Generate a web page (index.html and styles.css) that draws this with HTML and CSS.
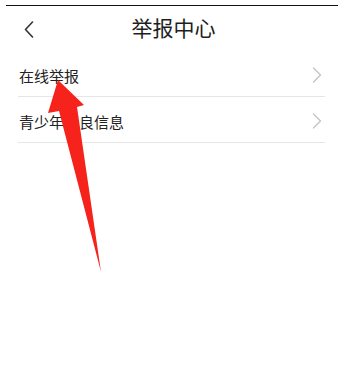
FILE: index.html
```html
<!DOCTYPE html>
<html lang="zh-CN">
<head>
<meta charset="utf-8">
<title>举报中心</title>
<link rel="stylesheet" href="styles.css">
</head>
<body>
<div class="page">
  <div class="topline"></div>
  <header class="nav">
    <svg class="back" width="10" height="17" viewBox="0 0 10 17"><path d="M8.5 1 L1.5 8.5 L8.5 16" fill="none" stroke="#333" stroke-width="1.6" stroke-linecap="round" stroke-linejoin="round"/></svg>
    <h1 class="title">举报中心</h1>
  </header>
  <ul class="list">
    <li class="row"><span class="label">在线举报</span><svg class="chev" width="10" height="16" viewBox="0 0 10 16"><path d="M1.5 1 L8.5 8 L1.5 15" fill="none" stroke="#c4c4c4" stroke-width="1.4" stroke-linecap="round" stroke-linejoin="round"/></svg></li>
    <li class="row"><span class="label">青少年不良信息</span><svg class="chev" width="10" height="16" viewBox="0 0 10 16"><path d="M1.5 1 L8.5 8 L1.5 15" fill="none" stroke="#c4c4c4" stroke-width="1.4" stroke-linecap="round" stroke-linejoin="round"/></svg></li>
  </ul>
  <svg class="arrow" width="340" height="370" viewBox="0 0 340 370"><polygon points="58,80 84,105 77,107 101,272 59,111 48,113" fill="#f5231b"/></svg>
</div>
</body>
</html>
```
FILE: styles.css
```css
html, body {
  margin: 0;
  padding: 0;
  background: #fff;
}
.page {
  position: relative;
  width: 340px;
  height: 370px;
  overflow: hidden;
  font-family: "Noto Sans CJK SC", "Noto Sans", sans-serif;
  color: #222;
}
.topline {
  margin: 5px 2px 0 6px;
  height: 1px;
  background: #111;
}
.nav {
  position: relative;
  height: 45px;
  display: flex;
  align-items: center;
  justify-content: center;
}
.back {
  position: absolute;
  left: 24px;
  top: 15px;
}
.title {
  margin: 0;
  font-size: 21px;
  font-weight: 400;
  line-height: 1;
  color: #1e1e1e;
  padding-left: 7px;
  padding-bottom: 2px;
}
.list {
  list-style: none;
  margin: 0 15px 0 18px;
  padding: 0;
}
.row {
  height: 45px;
  border-bottom: 1px solid #e6e6e6;
  display: flex;
  align-items: center;
  justify-content: space-between;
  padding: 3px 3px 0 1px;
  box-sizing: border-box;
  height: 46px;
}
.label {
  font-size: 15px;
  line-height: 1;
  color: #222;
}
.chev {
  display: block;
}
.arrow {
  position: absolute;
  left: 0;
  top: 0;
  pointer-events: none;
}
```
